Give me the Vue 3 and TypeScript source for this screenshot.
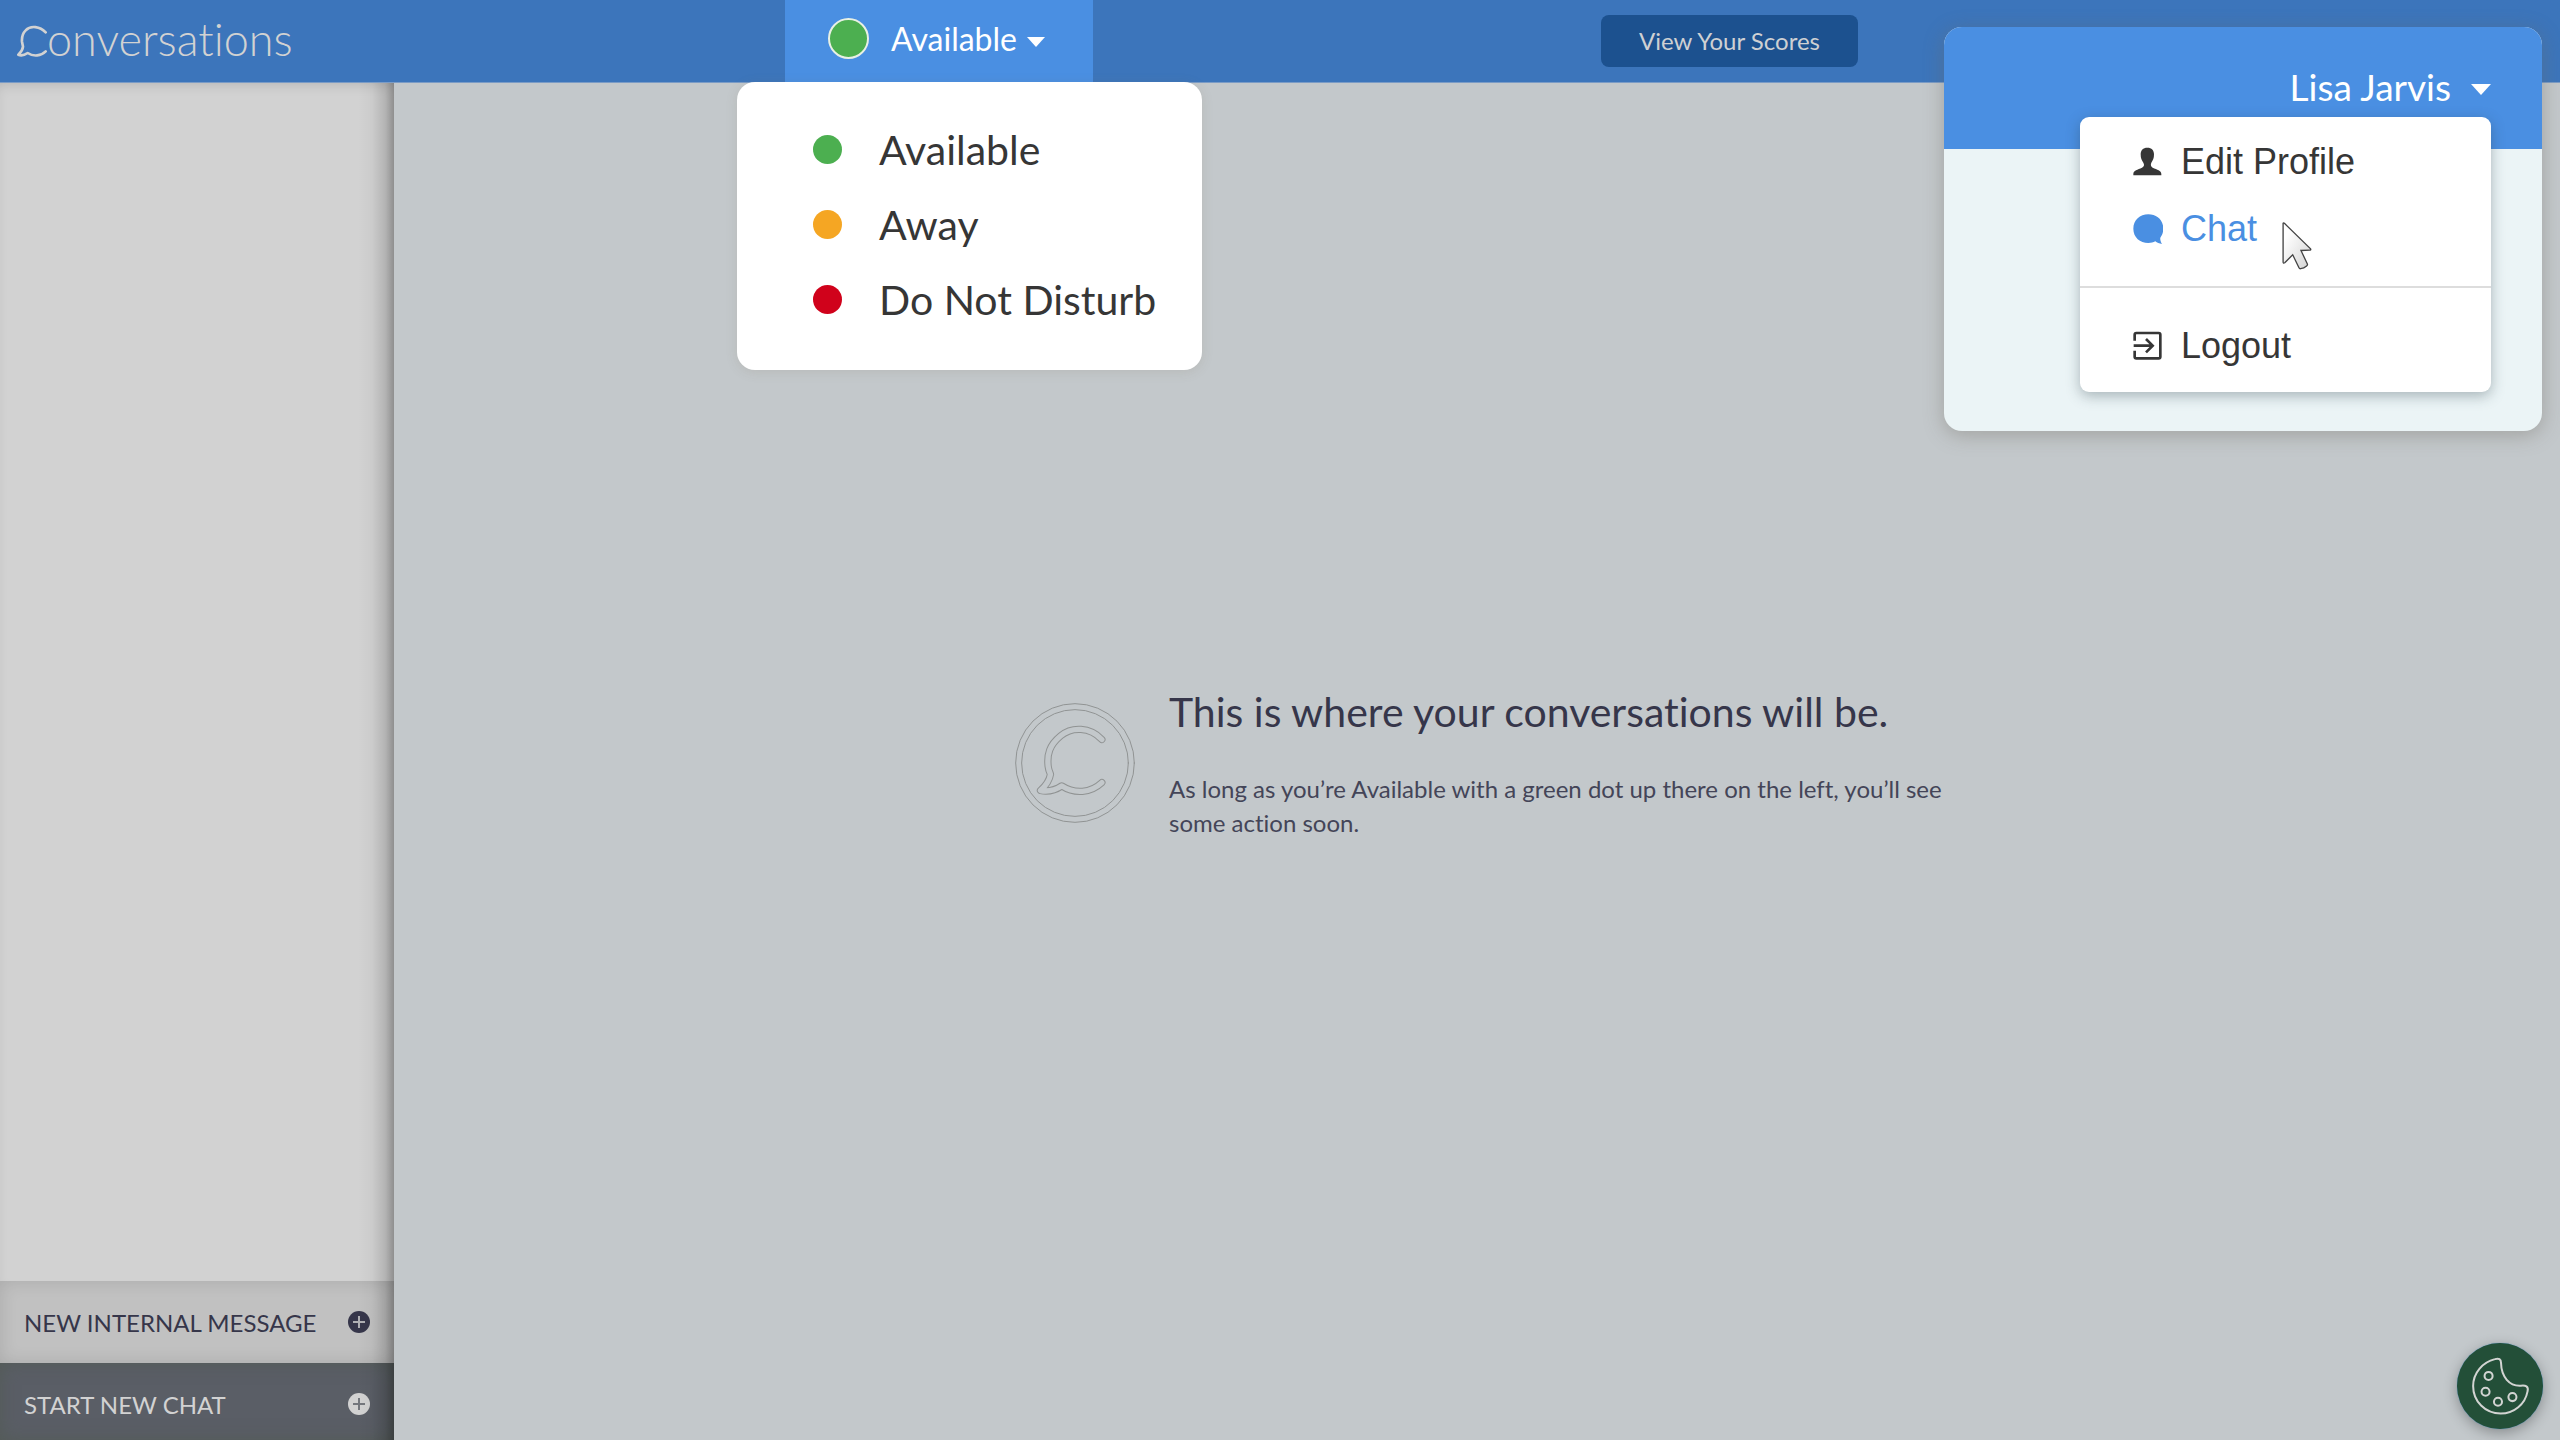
<script setup lang="ts">
import { ref } from 'vue'

interface Status {
  label: string
  color: string
}

const statuses: Status[] = [
  { label: 'Available', color: '#4caf50' },
  { label: 'Away', color: '#f5a623' },
  { label: 'Do Not Disturb', color: '#d0021b' },
]

const current = ref<Status>(statuses[0])
</script>

<template>
  <div class="app">
    <header class="topbar">
      <a class="brand" href="#" aria-label="Conversations">
        <svg class="brand-mark" viewBox="48 72 93 99" aria-hidden="true">
          <path d="M137 94C120 76 92 72 77 88C66 99 65 110 66 122L69 137C68 148 64 153 55 161C64 165 74 162 83 156C101 168 123 165 137 151" />
        </svg>
        <span class="brand-text">onversations</span>
      </a>

      <div class="status">
        <button class="status-toggle" type="button" aria-haspopup="menu" aria-expanded="true">
          <span class="status-light" :style="{ background: current.color }"></span>
          <span>{{ current.label }}</span>
          <svg class="caret caret-small" viewBox="0 0 20 11" aria-hidden="true"><path d="M0 0h20L10 11z" /></svg>
        </button>
        <div class="status-menu" role="menu">
          <button
            v-for="s in statuses"
            :key="s.label"
            class="status-item"
            type="button"
            role="menuitem"
            @click="current = s"
          >
            <span class="dot" :style="{ background: s.color }"></span>
            <span>{{ s.label }}</span>
          </button>
        </div>
      </div>

      <button class="scores" type="button">View Your Scores</button>
    </header>

    <div class="body">
      <aside class="sidebar">
        <div class="thread-list"></div>
        <button class="side-action internal" type="button">
          <span>NEW INTERNAL MESSAGE</span>
          <svg viewBox="0 0 22 22" aria-hidden="true">
            <circle cx="11" cy="11" r="11" />
            <path d="M11 5v12M5 11h12" />
          </svg>
        </button>
        <button class="side-action start" type="button">
          <span>START NEW CHAT</span>
          <svg viewBox="0 0 22 22" aria-hidden="true">
            <circle cx="11" cy="11" r="11" />
            <path d="M11 5v12M5 11h12" />
          </svg>
        </button>
      </aside>

      <main class="content">
        <section class="empty">
          <svg class="empty-mark" viewBox="74 71 362 362" aria-hidden="true">
            <circle class="ring" cx="255" cy="252" r="179" />
            <circle class="ring" cx="255" cy="252" r="161" />
            <path
              class="bubble-edge"
              d="M336 181C300 143 245 142 212 170C178 198 170 225 174 262C175 272 178 279 181 286C178 306 168 319 151 335C174 339 196 334 215 321C254 346 302 343 336 311"
            />
            <path
              class="bubble-fill"
              d="M336 181C300 143 245 142 212 170C178 198 170 225 174 262C175 272 178 279 181 286C178 306 168 319 151 335C174 339 196 334 215 321C254 346 302 343 336 311"
            />
          </svg>
          <div class="empty-text">
            <h1>This is where your conversations will be.</h1>
            <p>As long as you’re Available with a green dot up there on the left, you’ll see some action soon.</p>
          </div>
        </section>
      </main>
    </div>

    <section class="account" aria-label="Account">
      <div class="account-bar">
        <button class="account-toggle" type="button" aria-haspopup="menu" aria-expanded="true">
          <span>Lisa Jarvis</span>
          <svg class="caret caret-large" viewBox="0 0 20 11" aria-hidden="true"><path d="M0 0h20L10 11z" /></svg>
        </button>
      </div>
      <nav class="account-menu">
        <a class="menu-link" href="#">
          <svg class="menu-icon" viewBox="158 109 90 90" aria-hidden="true">
            <path d="M201 111c13 0 20 8 20 20c0 12-3 18-8 25c-3 6-1 12 4 15c13 6 26 8 26 19v4h-84v-4c0-11 13-13 26-19c6-3 8-9 4-15c-5-7-8-13-8-25c0-12 7-20 20-20z" />
          </svg>
          <span>Edit Profile</span>
        </a>
        <a class="menu-link active" href="#">
          <svg class="menu-icon" viewBox="158 309 90 90" aria-hidden="true">
            <path d="M204 310c25 0 45 17 45 43c0 11-4 20-9 27c-1 6 1 12 5 19c-8-1-15-4-20-8c-6 3-13 5-21 5c-25 0-45-17-45-43s20-43 45-43z" />
          </svg>
          <span>Chat</span>
        </a>
        <hr />
        <a class="menu-link" href="#">
          <svg class="menu-icon" viewBox="158 661 90 90" aria-hidden="true">
            <path class="line" d="M163 690v-18q0-5 5-5h67q5 0 5 5v66q0 5-5 5h-67q-5 0-5-5v-18" />
            <path class="line" d="M160 705h55M197 685l20 20l-20 20" />
          </svg>
          <span>Logout</span>
        </a>
      </nav>
      <svg class="pointer" viewBox="606 337 90 145" aria-hidden="true">
        <defs>
          <linearGradient id="pointer-fill" x1="0" y1="0" x2="1" y2="1">
            <stop offset="0.2" stop-color="#ffffff" />
            <stop offset="1" stop-color="#d2d2d2" />
          </linearGradient>
        </defs>
        <path d="M609 341Q610 338 613 341L692 418Q694 422 689 422L663 423L682 463Q684 467 680 470Q672 477 662 478Q659 479 657 475L638 436L614 460Q609 463 609 458Z" />
      </svg>
    </section>

    <button class="cookie" type="button" aria-label="Cookie preferences">
      <svg viewBox="82 69 256 256" aria-hidden="true">
        <path d="M195 117Q213 112 213 128C214 170 238 198 272 196C286 194 296 198 292 213C285 251 252 279 212 279C166 279 130 243 130 197C130 158 158 126 195 117Z" />
        <circle cx="176" cy="167" r="12" />
        <circle cx="167" cy="214" r="12" />
        <circle cx="204" cy="244" r="12" />
        <circle cx="247" cy="230" r="12" />
      </svg>
    </button>
  </div>
</template>

<style>
body {
  margin: 0;
}
</style>

<style scoped>
.app {
  position: relative;
  display: flex;
  flex-direction: column;
  height: 100vh;
  overflow: hidden;
  background: #c3c8cb;
  font-family: Lato, sans-serif;
  font-variant-ligatures: none;
  color: #363636;
}

button {
  margin: 0;
  padding: 0;
  border: 0;
  background: none;
  color: inherit;
  font: inherit;
  font-variant-ligatures: none;
  cursor: pointer;
}

a {
  color: inherit;
  text-decoration: none;
}

.topbar {
  position: relative;
  z-index: 1;
  display: grid;
  grid-template-columns: 785fr 308fr 508fr 257fr 702fr;
  height: 82px;
  background: #3c75bb;
  border-bottom: 1px solid #7b9cc6;
}

.brand {
  display: flex;
  align-items: center;
  padding-left: 16px;
  color: #d2d2d2;
}

.brand-mark {
  width: 31px;
  height: 33px;
  fill: none;
  stroke: currentColor;
  stroke-width: 8;
  stroke-linecap: round;
  stroke-linejoin: round;
}

.brand-text {
  font-size: 45px;
  font-weight: 300;
  line-height: 60px;
  padding-bottom: 4px;
}

.status {
  position: relative;
  display: flex;
}

.status-toggle {
  display: flex;
  flex: 1;
  align-items: center;
  padding: 0 0 5px 43px;
  background: #4a8fe2;
  color: #ffffff;
  font-size: 32px;
}

.status-light {
  box-sizing: border-box;
  width: 41px;
  height: 41px;
  margin-right: 22px;
  border: 2px solid #e8f0e4;
  border-radius: 50%;
}

.caret {
  width: 20px;
  height: 11px;
  fill: #ffffff;
}

.caret-small {
  width: 18px;
  height: 10px;
  margin: 6px 0 0 10px;
}

.caret-large {
  margin-top: 6px;
}

.status-menu {
  position: absolute;
  top: 82px;
  left: -48px;
  display: flex;
  flex-direction: column;
  box-sizing: border-box;
  width: 465px;
  padding: 30px 0 33px;
  border-radius: 18px;
  background: #ffffff;
  box-shadow: 0 2px 12px rgba(120, 110, 80, 0.15);
}

.status-item {
  display: flex;
  align-items: center;
  gap: 37px;
  height: 75px;
  padding-left: 76px;
  font-size: 41px;
  white-space: nowrap;
}

.dot {
  width: 29px;
  height: 29px;
  border-radius: 50%;
}

.scores {
  grid-column: 4;
  align-self: center;
  height: 52px;
  padding-bottom: 2px;
  border-radius: 8px;
  background: #1c518f;
  color: #ced0d3;
  font-size: 24px;
}

.body {
  display: flex;
  flex: 1;
  min-height: 0;
}

.sidebar {
  position: relative;
  display: flex;
  flex-direction: column;
  width: 394px;
  background: #d2d2d2;
}

.sidebar::after {
  content: '';
  position: absolute;
  inset: 0;
  background: linear-gradient(to left, rgba(0, 0, 0, 0.3), rgba(0, 0, 0, 0.14) 9px, rgba(0, 0, 0, 0.03) 22px, transparent 36px);
  pointer-events: none;
}

.thread-list {
  flex: 1;
  box-shadow: inset 0 6px 14px -6px rgba(0, 0, 0, 0.16);
}

.side-action {
  display: flex;
  align-items: center;
  justify-content: space-between;
  height: 82px;
  padding: 0 24px;
  font-size: 24px;
}

.side-action svg {
  width: 22px;
  height: 22px;
  fill: currentColor;
  stroke-width: 2;
}

.internal {
  background: #c1c1c1;
  color: #36364a;
  box-shadow: inset 0 0 18px rgba(0, 0, 0, 0.12);
}

.internal path {
  stroke: #b0b0b4;
}

.start {
  height: 77px;
  padding-top: 5px;
  background: #5a5e66;
  color: #d2d2d2;
  box-shadow: inset 0 0 18px rgba(80, 90, 80, 0.7);
}

.start path {
  stroke: #74777d;
}

.content {
  display: flex;
  flex: 1;
  align-items: center;
  justify-content: center;
}

.empty {
  display: flex;
  align-items: center;
  gap: 34px;
  padding: 2px 0 0 10px;
  color: #36364a;
}

.empty-mark {
  width: 120px;
  height: 120px;
  fill: none;
  stroke: #909393;
  stroke-linecap: round;
  stroke-linejoin: round;
}

.ring {
  stroke-width: 3;
}

.bubble-edge {
  stroke-width: 22px;
}

.bubble-fill {
  stroke: #c3c8cb;
  stroke-width: 16;
}

.empty-text {
  width: 780px;
}

h1 {
  margin: 0 0 34px;
  font-size: 41px;
  font-weight: 400;
  line-height: 52px;
}

p {
  margin: 0;
  font-size: 24px;
  line-height: 34px;
  color: #444558;
}

.account {
  position: absolute;
  z-index: 2;
  top: 27px;
  right: 18px;
  width: 598px;
  height: 404px;
  border-radius: 18px;
  background: #ebf4f6;
  box-shadow: 0 4px 20px rgba(110, 105, 95, 0.4);
}

.account-bar {
  display: flex;
  justify-content: flex-end;
  height: 122px;
  padding-right: 51px;
  border-radius: 18px 18px 0 0;
  background: #4a8fe2;
}

.account-toggle {
  display: flex;
  align-items: center;
  gap: 20px;
  height: 118px;
  color: #ffffff;
  font-size: 37px;
}

.account-menu {
  position: absolute;
  top: 90px;
  right: 51px;
  box-sizing: border-box;
  width: 411px;
  height: 275px;
  padding-top: 11px;
  border-radius: 9px;
  background: #ffffff;
  box-shadow: 0 4px 14px rgba(40, 60, 70, 0.35);
  font-family: 'Liberation Sans', sans-serif;
}

.menu-link {
  display: flex;
  align-items: center;
  gap: 18px;
  height: 67px;
  padding-left: 53px;
  font-size: 36px;
}

.menu-icon {
  width: 30px;
  height: 30px;
  fill: currentColor;
}

.menu-icon .line {
  fill: none;
  stroke: currentColor;
  stroke-width: 8;
}

.active {
  color: #4a8fe2;
}

hr {
  height: 2px;
  margin: 24px 0;
  border: 0;
  background: #dddddd;
}

.pointer {
  position: absolute;
  top: 195px;
  left: 338px;
  width: 30px;
  height: 48px;
  fill: url(#pointer-fill);
  stroke: #444444;
  stroke-width: 4;
}

.cookie {
  position: absolute;
  right: 17px;
  bottom: 11px;
  width: 86px;
  height: 86px;
  border-radius: 50%;
  background: #234f38;
  box-shadow: 0 0 1px #3c8ac4, 0 4px 14px rgba(0, 0, 0, 0.3);
}

.cookie svg {
  display: block;
  width: 86px;
  height: 86px;
  fill: none;
  stroke: #d2d4d2;
  stroke-width: 6;
}
</style>
